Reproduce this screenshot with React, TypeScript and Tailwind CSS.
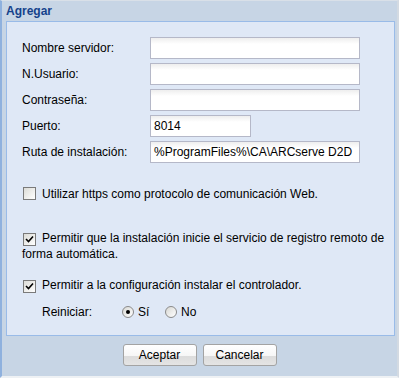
import React from "react";

const font = { fontFamily: '"Liberation Sans", Arial, sans-serif' };

function Field({ label, value = "", w = "w-[210px]" }: { label: string; value?: string; w?: string }) {
  return (
    <div className="flex items-center h-[22px]">
      <div className="w-[128px] text-[12px] leading-[16px] text-black">{label}</div>
      <div
        className={`${w} h-[22px] border border-[#b5b8c8] bg-gradient-to-b from-[#eeeeee] via-white via-[30%] to-white px-[3px] text-[12px] leading-[20px] text-black whitespace-nowrap overflow-hidden`}
      >
        {value}
      </div>
    </div>
  );
}

function Check({ checked }: { checked: boolean }) {
  return (
    <span className="inline-flex items-center justify-center w-[13px] h-[13px] border border-[#7a7a7a] bg-gradient-to-br from-[#dcdcd7] to-white align-[-2px] ml-[1px] mr-[6px]">
      {checked && (
        <svg width="9" height="9" viewBox="0 0 9 9">
          <path d="M1 4 L3.5 6.5 L8 1.5" stroke="#000" strokeWidth="1.6" fill="none" />
        </svg>
      )}
    </span>
  );
}

function Radio({ checked }: { checked: boolean }) {
  return (
    <span className="inline-flex items-center justify-center w-[12px] h-[12px] rounded-full border border-[#8a8a8a] bg-gradient-to-br from-[#d8d8d4] to-white">
      {checked && <span className="w-[4px] h-[4px] rounded-full bg-black" />}
    </span>
  );
}

function Btn({ children }: { children: React.ReactNode }) {
  return (
    <div className="w-[74px] h-[22px] rounded-[3px] border border-[#a3a3a3] bg-[linear-gradient(to_bottom,#ffffff_0%,#f6f6f6_55%,#dcdcdc_56%,#e4e4e4_100%)] flex items-center justify-center text-[12px] text-black">
      {children}
    </div>
  );
}

export default function App() {
  return (
    <div
      style={font}
      className="w-[399px] h-[378px] box-border bg-[#c7d5e5] border-l-2 border-l-[#8fb1de] border-t border-t-[#d9e0e8] border-r-2 border-r-[#d3dae2] border-b-2 border-b-[#eef1f4] flex flex-col"
    >
      <div className="h-[20px] pl-[4px] pt-[3px] text-[12px] leading-[14px] font-bold text-[#15428b]">Agregar</div>
      <div className="ml-[4px] mr-[2px] h-[315px] border border-[#99bbe8] bg-[#dfe8f6] pl-[15px] pt-[15px] flex flex-col">
        <div className="flex flex-col gap-[4px]">
          <Field label="Nombre servidor:" />
          <Field label="N.Usuario:" />
          <Field label="Contraseña:" />
          <Field label="Puerto:" value="8014" w="w-[101px]" />
          <Field label="Ruta de instalación:" value="%ProgramFiles%\CA\ARCserve D2D" />
        </div>
        <div className="mt-[23px] text-[12px] leading-[16px] whitespace-nowrap">
          <Check checked={false} />
          Utilizar https como protocolo de comunicación Web.
        </div>
        <div className="mt-[28px] text-[12px] leading-[16px] whitespace-nowrap">
          <Check checked={true} />
          Permitir que la instalación inicie el servicio de registro remoto de
          <br />
          forma automática.
        </div>
        <div className="mt-[15px] text-[12px] leading-[16px] whitespace-nowrap">
          <Check checked={true} />
          Permitir a la configuración instalar el controlador.
        </div>
        <div className="mt-[11px] ml-[20px] flex items-center text-[12px] leading-[16px]">
          <span className="w-[80px]">Reiniciar:</span>
          <Radio checked={true} />
          <span className="ml-[4px] w-[27px]">Sí</span>
          <Radio checked={false} />
          <span className="ml-[4px]">No</span>
        </div>
      </div>
      <div className="mt-[8px] flex justify-center gap-[6px]">
        <Btn>Aceptar</Btn>
        <Btn>Cancelar</Btn>
      </div>
    </div>
  );
}
